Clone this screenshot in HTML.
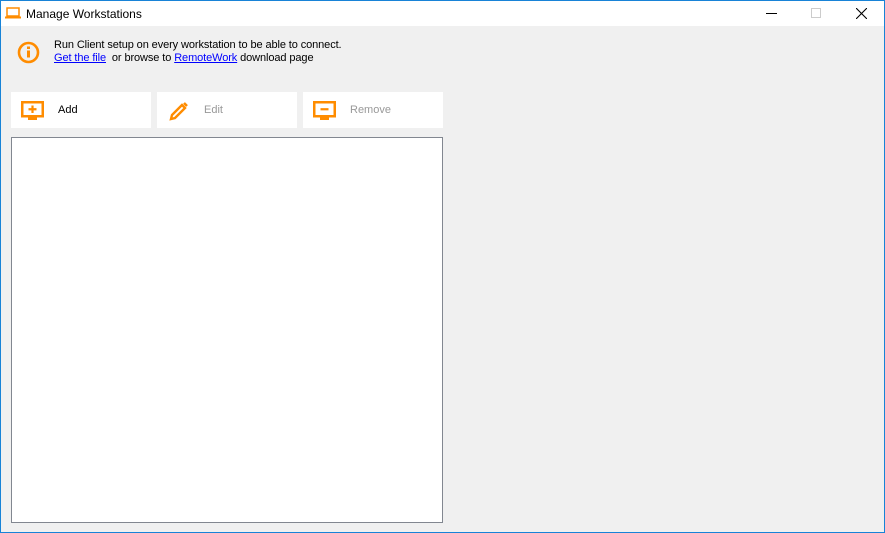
<!DOCTYPE html>
<html><head><style>
*{margin:0;padding:0;box-sizing:border-box}
body{width:885px;height:533px;overflow:hidden;font-family:"Liberation Sans",sans-serif;font-size:12px;background:#f0f0f0;position:relative}
.win{position:absolute;left:0;top:0;width:885px;height:533px;border:1px solid #1883d7}
.title{position:absolute;left:0;top:0;width:883px;height:25px;background:#fff}
.t{position:absolute;left:25px;top:6px;font-size:12px;color:#000}
.btn{position:absolute;top:91px;width:140px;height:36px;background:#fff}
.btn span{position:absolute;left:47px;top:12px;font-size:11px}
a{color:#0000ff;text-decoration:underline}
svg{position:absolute}
</style></head><body>
<div class="win">
<div class="title">
<svg style="left:4px;top:6px" width="16" height="13"><rect x="2" y="1" width="12" height="8" fill="none" stroke="#ff8c00" stroke-width="1.5"/><rect x="0" y="9.5" width="16" height="2" fill="#ff8c00"/></svg>
<div class="t">Manage Workstations</div>
<div style="position:absolute;left:765px;top:12px;width:11px;height:1px;background:#000"></div>
<div style="position:absolute;left:810px;top:7px;width:10px;height:10px;border:1px solid #ccc"></div>
<svg style="left:855px;top:7px" width="11" height="11"><path d="M0 0L11 11M11 0L0 11" stroke="#000" stroke-width="1.1"/></svg>
</div>
<svg style="left:15px;top:39px" width="25" height="25"><circle cx="12.5" cy="12.5" r="9.5" fill="none" stroke="#ff8c00" stroke-width="2.6"/><rect x="11" y="10.5" width="3" height="7" fill="#ff8c00"/><rect x="11" y="6.5" width="3" height="2.5" fill="#ff8c00"/></svg>
<div style="position:absolute;left:53px;top:38px;line-height:13px;font-size:11px;letter-spacing:-0.1px">Run Client setup on every workstation to be able to connect.<br><a>Get the file</a>&nbsp; or browse to <a>RemoteWork</a> download page</div>
<div class="btn" style="left:10px"><svg style="left:10px;top:9px" width="23" height="20"><rect x="1.25" y="1.25" width="20.5" height="14" fill="none" stroke="#ff8c00" stroke-width="2.5"/><rect x="7" y="16" width="9" height="3" fill="#ff8c00"/><path d="M11.5 4.5v7.5M7.5 8.25h8" stroke="#ff8c00" stroke-width="2.2"/></svg><span style="color:#000">Add</span></div>
<div class="btn" style="left:156px"><svg style="left:11px;top:8px" width="22" height="22"><path d="M3 19l1-4L14 5l3 3L7 18z" fill="none" stroke="#ff8c00" stroke-width="2.4"/><path d="M16 3l3 3" stroke="#ff8c00" stroke-width="2.6"/></svg><span style="color:#999">Edit</span></div>
<div class="btn" style="left:302px"><svg style="left:10px;top:9px" width="23" height="20"><rect x="1.25" y="1.25" width="20.5" height="14" fill="none" stroke="#ff8c00" stroke-width="2.5"/><rect x="7" y="16" width="9" height="3" fill="#ff8c00"/><path d="M7.5 8.25h8" stroke="#ff8c00" stroke-width="2.2"/></svg><span style="color:#999">Remove</span></div>
<div style="position:absolute;left:10px;top:136px;width:432px;height:386px;background:#fff;border:1px solid #828790"></div>
</div>
</body></html>
